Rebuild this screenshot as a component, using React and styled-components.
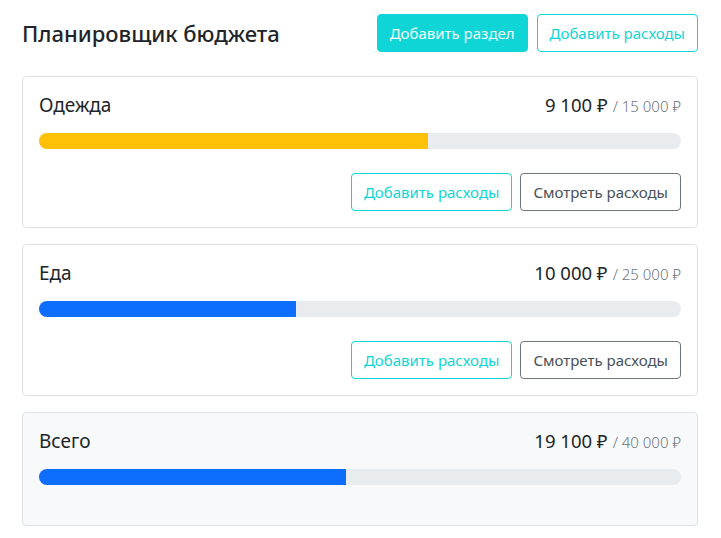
import React from 'react';
import styled, { createGlobalStyle } from 'styled-components';

const GlobalStyle = createGlobalStyle`
  body {
    margin: 0;
    background: #fff;
    color: #212529;
    font-family: "Noto Sans", "Open Sans", sans-serif;
  }
`;

const budgets = [
  { id: 'clothes', name: 'Одежда', amount: 9100, max: 15000 },
  { id: 'food', name: 'Еда', amount: 10000, max: 25000 },
];

const formatRub = (value) =>
  value.toLocaleString('ru-RU').replace(/\u00a0|\u202f/g, ' ') + ' ₽';

const barColor = (ratio) => {
  if (ratio < 0.5) return '#0d6efd';
  if (ratio < 0.75) return '#ffc107';
  return '#dc3545';
};

const BudgetCard = ({ name, amount, max, gray, hideButtons }) => {
  const ratio = amount / max;
  return (
    <Card gray={gray}>
      <TitleRow>
        <Name>{name}</Name>
        <Amount>
          {formatRub(amount)}
          <Max>/ {formatRub(max)}</Max>
        </Amount>
      </TitleRow>
      <Track>
        <Fill style={{ width: `${ratio * 100}%`, background: barColor(ratio) }} />
      </Track>
      {!hideButtons && (
        <Actions>
          <Button variant='outline'>Добавить расходы</Button>
          <Button variant='secondary'>Смотреть расходы</Button>
        </Actions>
      )}
    </Card>
  );
};

const App = () => {
  const total = budgets.reduce((s, b) => s + b.amount, 0);
  const totalMax = budgets.reduce((s, b) => s + b.max, 0);

  return (
    <Container>
      <GlobalStyle />
      <Header>
        <Title>Планировщик бюджета</Title>
        <HeaderButtons>
          <Button variant='filled'>Добавить раздел</Button>
          <Button variant='outline'>Добавить расходы</Button>
        </HeaderButtons>
      </Header>
      <List>
        {budgets.map((b) => (
          <BudgetCard key={b.id} name={b.name} amount={b.amount} max={b.max} />
        ))}
        <BudgetCard name='Всего' amount={total} max={totalMax} gray hideButtons />
      </List>
    </Container>
  );
};

export default App;

const Container = styled.main`
  padding: 14px 23px 12px 22px;
`;

const Header = styled.header`
  display: flex;
  align-items: center;
  justify-content: space-between;
  margin-bottom: 24px;
`;

const Title = styled.h1`
  margin: 0;
  font-size: 22px;
  font-weight: 500;
  line-height: 1.2;
  color: #212529;
`;

const HeaderButtons = styled.div`
  display: flex;
  gap: 9px;
`;

const Button = styled.button`
  font-family: inherit;
  font-size: 15px;
  line-height: 24px;
  height: 38px;
  padding: 6px 12px;
  border-radius: 4px;
  cursor: pointer;
  border: 1px solid
    ${({ variant }) => (variant === 'secondary' ? '#6c757d' : '#0fd5d6')};
  background: ${({ variant }) => (variant === 'filled' ? '#0fd5d6' : '#fff')};
  color: ${({ variant }) =>
    variant === 'filled'
      ? '#f4fbfb'
      : variant === 'outline'
      ? '#0fd5d6'
      : '#495057'};
`;

const List = styled.div`
  display: flex;
  flex-direction: column;
  gap: 16px;
`;

const Card = styled.section`
  border: 1px solid #dee2e6;
  border-radius: 4px;
  padding: 16px;
  background: ${({ gray }) => (gray ? '#f8f9fa' : '#fff')};
`;

const TitleRow = styled.div`
  display: flex;
  align-items: center;
  justify-content: space-between;
  height: 24px;
  margin-bottom: 16px;
`;

const Name = styled.h2`
  margin: 0;
  font-size: 19px;
  font-weight: 400;
  line-height: 24px;
`;

const Amount = styled.p`
  margin: 0;
  font-size: 18.5px;
  line-height: 24px;
`;

const Max = styled.small`
  margin-left: 5px;
  font-size: 15px;
  font-weight: 300;
  color: #6c757d;
`;

const Track = styled.div`
  height: 16px;
  border-radius: 8px;
  background: #e9ecef;
  overflow: hidden;
  display: flex;
  margin-bottom: 24px;
`;

const Fill = styled.div`
  height: 100%;
`;

const Actions = styled.div`
  display: flex;
  justify-content: flex-end;
  gap: 8px;
`;
